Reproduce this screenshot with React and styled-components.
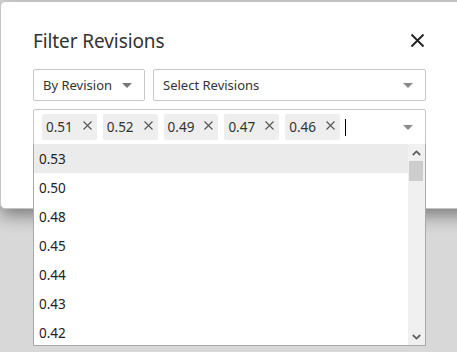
import React, { useState } from 'react';
import styled, { createGlobalStyle } from 'styled-components';

const GlobalStyle = createGlobalStyle`
    html, body {
        margin: 0;
        padding: 0;
        background: #d8d8d8;
        font-family: "Noto Sans", "Open Sans", sans-serif;
        overflow: hidden;
    }
`;

const Page = styled.div`
    width: 457px;
    height: 352px;
    padding: 1px 0 0 0;
    box-sizing: border-box;
    overflow: hidden;
`;

const Dialog = styled.div`
    width: 480px;
    height: 208px;
    box-sizing: border-box;
    background: #fff;
    border: 1px solid #c4c4c4;
    border-radius: 5px;
    box-shadow: 0 6px 18px rgba(0, 0, 0, 0.45);
    padding: 22px 0 0 32px;
`;

const Header = styled.div`
    display: flex;
    align-items: center;
    width: 392px;
    height: 34px;
`;

const Title = styled.h2`
    flex: 1;
    margin: 0;
    font-size: 19px;
    font-weight: 400;
    color: #333;
    letter-spacing: -0.1px;
`;

const CloseBtn = styled.button`
    border: 0;
    background: none;
    padding: 0;
    width: 15px;
    height: 15px;
    display: flex;
    margin-top: -2px;
    cursor: pointer;
`;

const Controls = styled.div`
    display: flex;
    flex-direction: column;
    gap: 8px;
    margin-top: 11px;
    width: 393px;
`;

const SelectRow = styled.div`
    display: flex;
    gap: 8px;
`;

const Select = styled.div`
    display: flex;
    align-items: center;
    box-sizing: border-box;
    height: 32px;
    width: ${p => p.$width || 'auto'};
    flex: ${p => (p.$grow ? 1 : 'none')};
    border: 1px solid #c6c6c6;
    border-radius: 2px;
    padding: 0 12px 0 9px;
    font-size: 13px;
    color: #333;
`;

const SelectLabel = styled.span`
    flex: 1;
`;

const Caret = styled.span`
    width: 0;
    height: 0;
    border-left: 5px solid transparent;
    border-right: 5px solid transparent;
    border-top: 5px solid ${p => p.$color || '#8a8a8a'};
`;

const Multi = styled.div`
    position: relative;
    box-sizing: border-box;
    border: 1px solid #c6c6c6;
    border-radius: 2px;
    height: 36px;
`;

const TagRow = styled.div`
    display: flex;
    align-items: center;
    gap: 6px;
    height: 100%;
    padding: 0 12px 0 8px;
`;

const Tag = styled.span`
    display: flex;
    align-items: center;
    height: 26px;
    padding: 0 5px 0 4px;
    background: #eeeeee;
    border-radius: 2px;
    font-size: 13.5px;
    color: #333;
`;

const TagX = styled.span`
    display: flex;
    margin-left: 10px;
    margin-top: -4px;
`;

const Cursor = styled.span`
    width: 1px;
    height: 17px;
    background: #000;
    margin-left: -1px;
`;

const Spacer = styled.span`
    flex: 1;
`;

const Menu = styled.div`
    position: absolute;
    left: -1px;
    right: -1px;
    top: 34px;
    height: 202px;
    box-sizing: border-box;
    display: flex;
    background: #fff;
    border: 1px solid #a8a8a8;
    border-top: 0;
`;

const List = styled.div`
    flex: 1;
    overflow: hidden;
`;

const Item = styled.div`
    height: 29px;
    display: flex;
    align-items: center;
    padding-left: 5px;
    font-size: 13.5px;
    color: #222;
    background: ${p => (p.$active ? '#ebebeb' : 'transparent')};
`;

const Scrollbar = styled.div`
    width: 17px;
    display: flex;
    flex-direction: column;
    background: #f0f0f0;
`;

const ScrollArrow = styled.div`
    height: 17px;
    display: flex;
    align-items: center;
    justify-content: center;
`;

const Track = styled.div`
    flex: 1;
`;

const Thumb = styled.div`
    height: 20px;
    margin: 0 2px 0 1px;
    background: #cdcdcd;
`;

const Arrow = ({ up }) => (
    <svg width="9" height="6" viewBox="0 0 9 6">
        <path
            d={up ? 'M0.8 5 L4.5 1.4 L8.2 5' : 'M0.8 1 L4.5 4.6 L8.2 1'}
            fill="none"
            stroke="#606060"
            strokeWidth="1.8"
        />
    </svg>
);

const selected = ['0.51', '0.52', '0.49', '0.47', '0.46'];
const options = ['0.53', '0.50', '0.48', '0.45', '0.44', '0.43', '0.42'];

export default function App() {
    const [tags] = useState(selected);

    return (
        <Page>
            <GlobalStyle />
            <Dialog>
                <Header>
                    <Title>Filter Revisions</Title>
                    <CloseBtn aria-label="Close">
                        <svg width="15" height="15" viewBox="0 0 15 15">
                            <path d="M1.5 1.5 L13.5 13.5 M13.5 1.5 L1.5 13.5" stroke="#222" strokeWidth="1.9" />
                        </svg>
                    </CloseBtn>
                </Header>
                <Controls>
                    <SelectRow>
                        <Select $width="112px">
                            <SelectLabel>By Revision</SelectLabel>
                            <Caret $color="#777" />
                        </Select>
                        <Select $grow>
                            <SelectLabel>Select Revisions</SelectLabel>
                            <Caret />
                        </Select>
                    </SelectRow>
                    <Multi>
                        <TagRow>
                            {tags.map(t => (
                                <Tag key={t}>
                                    {t}
                                    <TagX>
                                        <svg width="9" height="9" viewBox="0 0 9 9">
                                            <path d="M0.5 0.5 L8.5 8.5 M8.5 0.5 L0.5 8.5" stroke="#555" strokeWidth="1.1" />
                                        </svg>
                                    </TagX>
                                </Tag>
                            ))}
                            <Cursor />
                            <Spacer />
                            <Caret />
                        </TagRow>
                        <Menu>
                            <List>
                                {options.map((o, i) => (
                                    <Item key={o} $active={i === 0}>{o}</Item>
                                ))}
                            </List>
                            <Scrollbar>
                                <ScrollArrow><Arrow up /></ScrollArrow>
                                <Track>
                                    <Thumb />
                                </Track>
                                <ScrollArrow><Arrow /></ScrollArrow>
                            </Scrollbar>
                        </Menu>
                    </Multi>
                </Controls>
            </Dialog>
        </Page>
    );
}
